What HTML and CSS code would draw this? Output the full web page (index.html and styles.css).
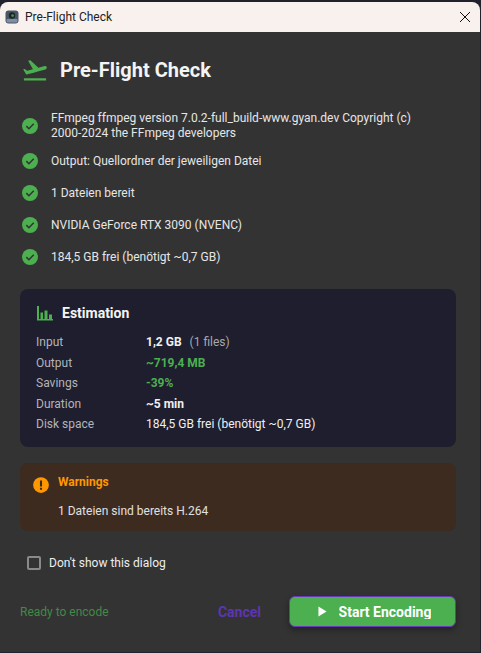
FILE: index.html
```html
<!DOCTYPE html>
<html lang="en">
<head>
<meta charset="utf-8">
<title>Pre-Flight Check</title>
<link rel="stylesheet" href="styles.css">
</head>
<body>
<div class="window">
  <header class="titlebar">
    <svg class="app-icon" viewBox="0 0 14 14" width="14" height="14"><rect x="0.5" y="0.5" width="13" height="13" rx="3" fill="#4a5666"/><rect x="1.5" y="9" width="11" height="3.5" rx="1" fill="#7d8ea6"/><circle cx="7" cy="5.5" r="3.2" fill="#20252c"/><circle cx="7.6" cy="5.6" r="1.3" fill="#3f9a4a"/></svg>
    <span class="titlebar-text">Pre-Flight Check</span>
    <svg class="close-icon" viewBox="0 0 12 12" width="12" height="12"><path d="M1 1L11 11M11 1L1 11" stroke="#111" stroke-width="1" fill="none"/></svg>
  </header>
  <main class="content">
    <div class="heading">
      <svg class="heading-icon" viewBox="0 0 24 24" width="28" height="28"><path d="M2.5 19h19v2h-19v-2zm19.57-9.36c-.21-.8-1.04-1.28-1.84-1.06L14.92 10l-6.9-6.43-1.93.51 4.14 7.17-4.97 1.33-1.97-1.54-1.45.39 2.59 4.49s7.12-1.9 16.57-4.43c.81-.23 1.28-1.05 1.07-1.85z" fill="#4caf50"/></svg>
      <h1>Pre-Flight Check</h1>
    </div>
    <ul class="checks">
      <li class="two-line"><svg class="check" viewBox="0 0 24 24"><use href="#ok"/></svg><span>FFmpeg ffmpeg version 7.0.2-full_build-www.gyan.dev Copyright (c) 2000-2024 the FFmpeg developers</span></li>
      <li><svg class="check" viewBox="0 0 24 24"><use href="#ok"/></svg><span>Output: Quellordner der jeweiligen Datei</span></li>
      <li><svg class="check" viewBox="0 0 24 24"><use href="#ok"/></svg><span>1 Dateien bereit</span></li>
      <li><svg class="check" viewBox="0 0 24 24"><use href="#ok"/></svg><span>NVIDIA GeForce RTX 3090 (NVENC)</span></li>
      <li><svg class="check" viewBox="0 0 24 24"><use href="#ok"/></svg><span>184,5 GB frei (benötigt ~0,7 GB)</span></li>
    </ul>
    <section class="estimation">
      <div class="est-head">
        <svg class="est-icon" viewBox="0 0 16 15" width="16" height="15"><path d="M0 0h2v13h14v1.5H0z" fill="#4caf50"/><path d="M3.5 6.5h2.5V14H3.5zM7.5 4.5h3V14h-3zM12 8.5h3V14h-3z" fill="#4caf50"/></svg>
        <h2>Estimation</h2>
      </div>
      <dl class="est-grid">
        <dt>Input</dt><dd><b>1,2 GB</b><span class="muted">(1 files)</span></dd>
        <dt>Output</dt><dd class="green"><b>~719,4 MB</b></dd>
        <dt>Savings</dt><dd class="green"><b>-39%</b></dd>
        <dt>Duration</dt><dd><b>~5 min</b></dd>
        <dt>Disk space</dt><dd>184,5 GB frei (benötigt ~0,7 GB)</dd>
      </dl>
    </section>
    <section class="warnings">
      <svg class="warn-icon" viewBox="0 0 24 24" width="18" height="18"><circle cx="12" cy="12" r="10.5" fill="#ff9800"/><path d="M10.6 6h2.8v8h-2.8zM10.6 15.6h2.8v2.6h-2.8z" fill="#3d2b1f"/></svg>
      <div class="warn-body">
        <h3>Warnings</h3>
        <p>1 Dateien sind bereits H.264</p>
      </div>
    </section>
    <label class="dont-show"><span class="box"></span><span>Don't show this dialog</span></label>
    <footer class="actions">
      <span class="ready">Ready to encode</span>
      <span class="cancel">Cancel</span>
      <div class="start">
        <svg class="play" viewBox="0 0 10 12" width="9" height="11"><path d="M0.5 0.5L9.5 6L0.5 11.5Z" fill="#fff"/></svg>
        <span>Start Encoding</span>
      </div>
    </footer>
  </main>
</div>
<svg class="defs" width="0" height="0"><defs><g id="ok"><circle cx="12" cy="12" r="12" fill="#4caf50"/><path d="M6.5 12.2l3.9 3.9 7.2-7.4" fill="none" stroke="#333" stroke-width="2.2"/></g></defs></svg>
</body>
</html>
```
FILE: styles.css
```css
* { box-sizing: border-box; }
html, body { margin: 0; padding: 0; height: 100%; background: #22222e; overflow: hidden; }
body { padding-top: 2px; font-family: Roboto, "Liberation Sans", sans-serif; color: #e6e6e6; }
.defs { position: absolute; }
.window { width: 480px; height: 650px; background: #333; display: flex; flex-direction: column; border-radius: 8px 8px 0 0; overflow: hidden; }
.titlebar { height: 30px; flex: none; background: #f9f1ee; display: flex; align-items: center; padding: 0 9px 0 5px; gap: 6px; color: #222; }
.app-icon { flex: none; }
.titlebar-text { font-size: 12px; flex: 1; }
.close-icon { flex: none; }
.content { flex: 1; display: flex; flex-direction: column; padding: 0 24px 0 20px; }
.heading { display: flex; align-items: center; gap: 11px; margin-top: 23px; margin-left: 2px; height: 30px; }
.heading-icon { flex: none; margin-left: -1px; }
.heading h1 { margin: 0; font-size: 20px; font-weight: 700; color: #f4f4f4; }
.checks { list-style: none; margin: 26px 0 0; padding: 0; display: flex; flex-direction: column; gap: 12px; font-size: 12px; line-height: 15px; }
.checks li { display: flex; align-items: center; gap: 13px; min-height: 20px; }
.checks .two-line { margin-bottom: -2px; }
.checks span { padding-right: 30px; }
.check { width: 16px; height: 16px; flex: none; margin-left: 2px; }
.estimation { margin-top: 22px; background: #1e1e2e; border-radius: 8px; height: 158px; padding: 15px 16px; }
.est-head { display: flex; align-items: center; gap: 9px; height: 18px; }
.est-icon { flex: none; margin-left: 1px; }
.est-head h2 { margin: 0; font-size: 14px; font-weight: 700; color: #f4f4f4; }
.est-grid { margin: 10px 0 0; display: grid; grid-template-columns: 110px 1fr; grid-auto-rows: 20.5px; align-items: center; font-size: 12px; }
.est-grid dt { color: #b4b4b8; }
.est-grid dd { margin: 0; color: #f0f0f0; }
.est-grid b { font-weight: 700; }
.est-grid .muted { color: #a8a8ac; margin-left: 8px; }
.est-grid .green { color: #4caf50; }
.warnings { margin-top: 16px; background: #3d2b1f; border-radius: 8px; height: 68px; padding: 11px 12px 0 12px; display: flex; gap: 8px; }
.warn-icon { flex: none; margin-top: 2px; }
.warn-body h3 { margin: 0; font-size: 12px; font-weight: 700; color: #ff9800; line-height: 16px; }
.warn-body p { margin: 13px 0 0; font-size: 12px; color: #e0e0e0; line-height: 16px; }
.dont-show { margin-top: 21px; margin-left: 7px; display: flex; align-items: center; gap: 8px; font-size: 12px; height: 22px; color: #eee; }
.box { width: 14px; height: 14px; border: 2px solid #8a8a8a; border-radius: 2px; flex: none; }
.actions { margin-top: 22px; display: flex; align-items: center; height: 32px; font-size: 12px; }
.ready { color: #418a46; flex: 1; }
.cancel { color: #5e35b1; font-weight: 700; font-size: 14px; margin-right: 28px; }
.start { align-self: flex-start; width: 167px; height: 31px; background: #4caf50; border: 1px solid #673ab7; border-radius: 6px; box-shadow: 0 3px 6px rgba(0,0,0,.35); display: flex; align-items: center; justify-content: center; gap: 12px; color: #fff; font-weight: 700; font-size: 14px; padding-left: 4px; }
.start span { height: 14px; line-height: 15px; overflow: hidden; }
```
